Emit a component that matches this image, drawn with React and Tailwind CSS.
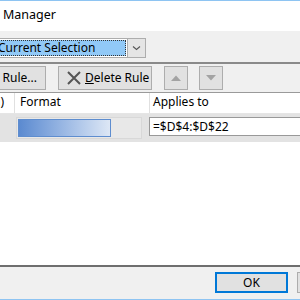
export default function App() {
  return (
    <div className="w-[300px] h-[300px] overflow-hidden bg-white flex flex-col text-[12px] text-black" style={{ fontFamily: '"Segoe UI", "Noto Sans", sans-serif' }}>
      {/* title bar */}
      <div className="h-px bg-[#8ec4f2] shrink-0" />
      <div className="h-[30px] shrink-0 bg-white flex items-center pl-[3px] pb-[1px] text-[12.5px]">Manager</div>

      {/* body */}
      <div className="flex-1 bg-[#f0f0f0] flex flex-col">
        {/* combo */}
        <div className="mt-[7px] h-[20px] flex shrink-0">
          <div className="flex-1 ml-[-20px] flex border border-[#adadad] border-r-0 bg-white p-[1px]">
            <div className="flex-1 bg-[#91c9f7] border border-dotted border-[#333] flex items-center pl-[15px] leading-none whitespace-nowrap">Current Selection</div>
          </div>
          <div className="w-[19px] shrink-0 border border-[#adadad] bg-[#e5e5e5] flex items-center justify-center">
            <svg width="9" height="6" viewBox="0 0 9 6"><path d="M1 1.5 L4.5 4.5 L8 1.5" fill="none" stroke="#555" strokeWidth="1.1" /></svg>
          </div>
          <div className="w-[154px] shrink-0" />
        </div>

        <div className="mt-[4px] h-[2px] bg-[#8a8a8a] shrink-0" />

        {/* toolbar */}
        <div className="mt-[2px] h-[25px] flex items-start shrink-0 whitespace-nowrap">
          <div className="shrink-0 ml-[-38px] w-[84px] h-[24px] border border-[#adadad] bg-[#e1e1e1] flex items-center justify-end pr-[8px]">
            <span><span className="underline">E</span>dit Rule...</span>
          </div>
          <div className="shrink-0 ml-[12px] w-[94px] h-[24px] border border-[#adadad] bg-[#e1e1e1] flex items-center pl-[8px] gap-[4px]">
            <svg width="14" height="14" viewBox="0 0 14 14" className="shrink-0"><path d="M1 1 L13 13 M13 1 L1 13" stroke="#555" strokeWidth="2" /></svg>
            <span><span className="underline">D</span>elete Rule</span>
          </div>
          <div className="shrink-0 ml-[12px] w-[24px] h-[24px] border border-[#adadad] bg-[#e1e1e1] flex items-center justify-center">
            <svg width="10" height="6" viewBox="0 0 10 6"><path d="M0 6 L5 0.5 L10 6 Z" fill="#a3a3a3" /></svg>
          </div>
          <div className="shrink-0 ml-[11px] w-[24px] h-[24px] border border-[#adadad] bg-[#e1e1e1] flex items-center justify-center">
            <svg width="10" height="6" viewBox="0 0 10 6"><path d="M0 0 L10 0 L5 5.5 Z" fill="#a3a3a3" /></svg>
          </div>
        </div>

        <div className="mt-[1px] h-px bg-[#9a9a9a] shrink-0" />

        {/* list */}
        <div className="h-[172px] bg-white flex flex-col shrink-0">
          <div className="h-[21px] flex border-b border-[#e5e5e5]">
            <div className="w-[15px] shrink-0 border-r border-[#e0e0e0] overflow-hidden flex items-center justify-end pr-[10px] pb-[2px] whitespace-nowrap">Rule (applied in order shown)</div>
            <div className="w-[135px] shrink-0 border-r border-[#e0e0e0] flex items-center pl-[5px] pb-[2px]">Format</div>
            <div className="flex-1 flex items-center pl-[3px] pb-[2px]">Applies to</div>
          </div>
          <div className="h-[28px] bg-[#e3e3e3] flex items-start">
            <div className="w-[16px] shrink-0" />
            <div className="shrink-0 mt-[3px] w-[126px] h-[22px] bg-[#e8e8e8] border border-[#d8d8d8] p-px">
              <div className="w-[93px] h-[18px] border border-[#5e8dcf] bg-gradient-to-r from-[#5b8ad0] to-[#dde7f5]" />
            </div>
            <div className="ml-[7px] mt-[3px] flex-1 h-[19px] bg-white border border-[#999] border-r-0 flex items-center pl-[3px] leading-none mr-[-2px]">=$D$4:$D$22</div>
          </div>
        </div>

        <div className="h-[2px] bg-[#6e6e6e] shrink-0" />

        {/* footer */}
        <div className="flex-1 flex items-start pt-[5px]">
          <div className="shrink-0 ml-[215px] w-[73px] h-[21px] border-2 border-[#0078d7] bg-[#e1e1e1] flex items-center justify-center">OK</div>
          <div className="shrink-0 ml-[9px] w-[20px] h-[21px] border border-[#adadad] bg-[#e1e1e1]" />
        </div>
      </div>
      <div className="h-px bg-[#8ec4f2] shrink-0" />
    </div>
  );
}
